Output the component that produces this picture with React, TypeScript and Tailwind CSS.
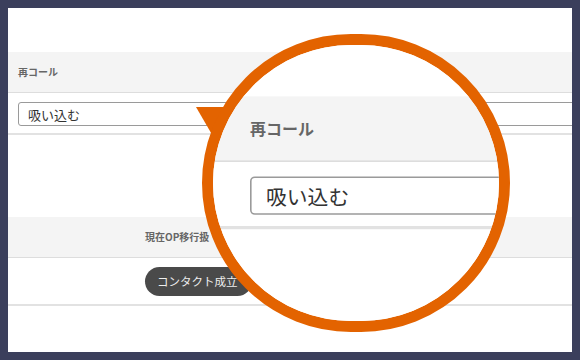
import React from 'react'

const jp = { fontFamily: '"Noto Sans CJK JP", "Noto Sans", sans-serif' }

function PageContent() {
    return (
        <div className="w-[564px] h-[344px] bg-white" style={jp}>
            <div className="h-[44px]" />
            <div className="h-[41px] bg-[#f4f4f4] border-b border-[#dddddd] flex items-center pl-[10px]">
                <span className="text-[10px] font-bold text-[#666666] leading-none">再コール</span>
            </div>
            <div className="pt-[9px] pb-[7px] pl-[10px] border-b-2 border-[#e2e2e2]">
                <div className="w-[600px] h-[24px] border border-[#9a9a9a] rounded-[3px] flex items-center pl-[9px]">
                    <span className="text-[13px] text-[#333333] leading-none">吸い込む</span>
                </div>
            </div>
            <div className="h-[82px]" />
            <div className="h-[41px] bg-[#f4f4f4] border-b border-[#dddddd] flex items-center pl-[137px]">
                <span className="text-[10px] font-bold text-[#666666] leading-none">現在OP移行扱</span>
            </div>
            <div className="pt-[9px] pb-[8px] pl-[137px] border-b-2 border-[#e2e2e2]">
                <div className="inline-flex items-center h-[29px] rounded-full bg-[#4a4a4a] pl-[12px] pr-[14px]">
                    <span className="text-[11.5px] text-[#eeeeee] leading-none">コンタクト成立</span>
                </div>
            </div>
        </div>
    )
}

// zoomed copy of the top part, widened to the left so the band runs to the ring
function ZoomedTop() {
    return (
        <div className="w-[604px] bg-white" style={jp}>
            <div className="h-[44px]" />
            <div className="h-[41px] bg-[#f4f4f4] border-b border-[#dddddd] flex items-center pl-[50px]">
                <span className="text-[10px] font-bold text-[#666666] leading-none">再コール</span>
            </div>
            <div className="pt-[9px] pb-[7px] pl-[50px] border-b-2 border-[#e2e2e2]">
                <div className="w-[600px] h-[24px] border border-[#9a9a9a] rounded-[3px] flex items-center pl-[9px]">
                    <span className="text-[13px] text-[#333333] leading-none">吸い込む</span>
                </div>
            </div>
            <div className="h-[82px]" />
        </div>
    )
}

export default function App() {
    return (
        <div className="w-[580px] h-[360px] bg-[#3b3f5c] p-2">
            <div className="relative w-[564px] h-[344px] bg-white overflow-hidden">
                <PageContent />

                <svg className="absolute left-0 top-0" width="564" height="344">
                    <polygon points="188,99 226,99 206,130" fill="#e36300" />
                </svg>

                <div className="absolute left-[194px] top-[26px] w-[308px] h-[298px] rounded-full border-[11px] border-[#e36300] overflow-hidden bg-white">
                    <div className="absolute left-[-43px] top-[-19px] origin-top-left scale-[1.6]">
                        <ZoomedTop />
                    </div>
                </div>
            </div>
        </div>
    )
}
